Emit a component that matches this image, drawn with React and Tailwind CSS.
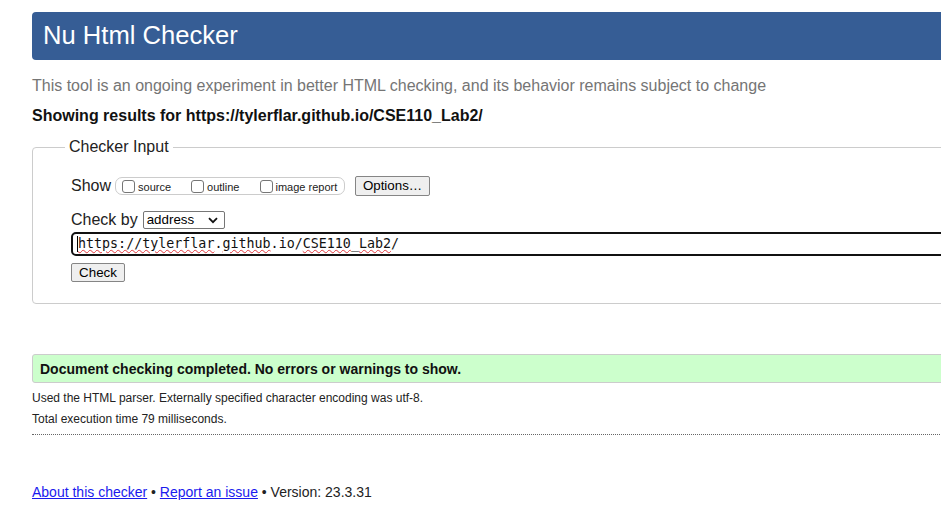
export default function App() {
  const sans = { fontFamily: '"Liberation Sans", Arial, sans-serif' };
  const squiggle = 'underline decoration-wavy decoration-[#e0393e] decoration-1 underline-offset-[1px]';

  return (
    <div className="h-[519px] w-[941px] overflow-hidden bg-white text-[#222]" style={sans}>
      <div className="w-[1100px] pl-[32px] pt-[12px]">
        <header className="flex h-[48px] items-center rounded-[4px] bg-[#365d95] pl-[11px]">
          <h1 className="text-[25.6px] font-normal leading-none text-white">Nu Html Checker</h1>
        </header>

        <p className="mt-[17px] text-[16px] leading-[18px] text-[#757575]">
          This tool is an ongoing experiment in better HTML checking, and its behavior remains subject to change
        </p>
        <p className="mt-[12px] text-[16px] font-bold leading-[18px] text-[#111]">
          Showing results for https://tylerflar.github.io/CSE110_Lab2/
        </p>

        <fieldset className="mt-[13px] rounded-[4px] border border-[#ccc] pb-[21px] pl-[38px] pt-[20px]">
          <legend className="-ml-[6px] px-[4px] text-[16px] leading-[18px] text-[#222]">Checker Input</legend>

          <div className="flex h-[20px] items-center">
            <span className="text-[16px] leading-[18px]">Show</span>
            <div className="ml-[4px] flex h-[18px] w-[230px] items-center rounded-[7px] border border-[#ccc] pl-[6px]">
              <label className="flex items-center">
                <span className="h-[13px] w-[13px] rounded-[3px] border border-[#767676] bg-white" />
                <span className="ml-[3px] mt-[3px] text-[11px] leading-none">source</span>
              </label>
              <label className="ml-[20px] flex items-center">
                <span className="h-[13px] w-[13px] rounded-[3px] border border-[#767676] bg-white" />
                <span className="ml-[3px] mt-[3px] text-[11px] leading-none">outline</span>
              </label>
              <label className="ml-[21px] flex items-center">
                <span className="h-[13px] w-[13px] rounded-[3px] border border-[#767676] bg-white" />
                <span className="ml-[2px] mt-[3px] text-[11px] leading-none">image report</span>
              </label>
            </div>
            <button
              type="button"
              className="ml-[10px] flex h-[20px] w-[75px] items-center justify-center rounded-[2px] border border-[#858585] bg-[#efefef] text-[13.33px] leading-none text-black"
            >
              Options…
            </button>
          </div>

          <div className="mt-[15px] flex h-[18px] items-center">
            <span className="text-[16px] leading-[18px]">Check by</span>
            <div className="ml-[5px] flex h-[18px] w-[82px] items-center justify-between rounded-[2px] border border-[#767676] bg-white pl-[3px] pr-[6px]">
              <span className="text-[13.33px] leading-none text-black">address</span>
              <svg width="10" height="7" viewBox="0 0 10 7" fill="none">
                <path d="M1 1.2 5 5.2 9 1.2" stroke="#111" strokeWidth="1.8" />
              </svg>
            </div>
          </div>

          <div className="mt-[3px] flex h-[24px] w-[1100px] items-center rounded-[5px] border-2 border-[#111] pl-[4px]">
            <span className="h-[16px] w-px bg-black" />
            <span
              className="whitespace-pre text-[13.33px] leading-none text-[#111]"
              style={{ fontFamily: '"DejaVu Sans Mono", "Liberation Mono", monospace' }}
            >
              <span className={squiggle}>https://tylerflar</span>.<span className={squiggle}>github</span>.io/<span className={squiggle}>CSE110</span>_<span className={squiggle}>Lab2</span>/
            </span>
          </div>

          <button
            type="button"
            className="mt-[7px] flex h-[19px] w-[54px] items-center justify-center rounded-[2px] border border-[#858585] bg-[#efefef] text-[13.33px] leading-none text-black"
          >
            Check
          </button>
        </fieldset>

        <div className="mt-[50px] flex h-[29px] items-center rounded-l-[3px] border border-[#ccc] bg-[#ccffcc] pl-[7px]">
          <p className="text-[14px] font-bold leading-none text-[#111]">
            Document checking completed. No errors or warnings to show.
          </p>
        </div>

        <p className="mt-[8px] text-[12px] leading-[14px] text-[#222]">
          Used the HTML parser. Externally specified character encoding was utf-8.
        </p>
        <p className="mt-[7px] text-[12px] leading-[14px] text-[#222]">Total execution time 79 milliseconds.</p>
        <div className="mt-[8px] border-t border-dotted border-[#666]" />

        <footer className="mt-[49px] text-[14px] leading-[16px] text-[#222]">
          <a href="#" className="text-[#1a1aee] underline">About this checker</a>
          {' • '}
          <a href="#" className="text-[#1a1aee] underline">Report an issue</a>
          {' • Version: 23.3.31'}
        </footer>
      </div>
    </div>
  );
}
